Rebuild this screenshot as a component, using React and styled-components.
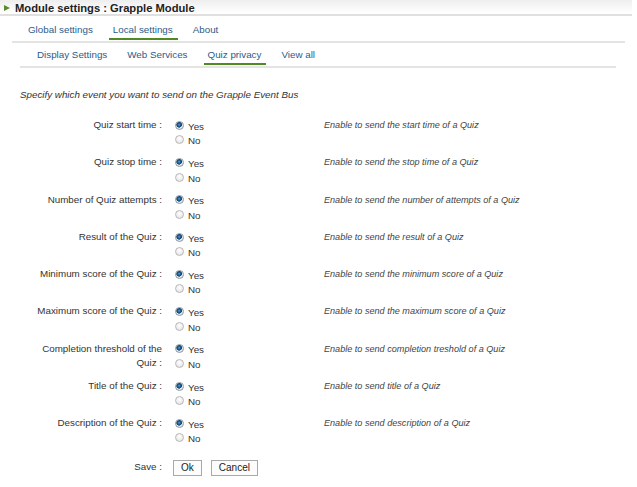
import React from "react";
import styled, { createGlobalStyle } from "styled-components";

const Global = createGlobalStyle`
  html, body { margin: 0; padding: 0; background: #fff; }
  body { font-family: "Liberation Sans", Arial, sans-serif; font-size: 9.8px; color: #333; }
`;

const Page = styled.div`
  width: 637px;
  min-height: 487px;
  background: #fff;
`;

const Header = styled.div`
  width: 632px;
  height: 16px;
  display: flex;
  align-items: center;
  gap: 5px;
  padding-left: 4px;
  box-sizing: border-box;
  background: linear-gradient(#eeeeee, #fbfbfb 70%, #ffffff);
  border-bottom: 2px solid #e0e0e0;
`;

const Arrow = styled.span`
  width: 0;
  height: 0;
  border-top: 3.5px solid transparent;
  border-bottom: 3.5px solid transparent;
  border-left: 6px solid #5a8c2c;
  margin-top: 1px;
`;

const Title = styled.h1`
  margin: 0;
  font-size: 11.2px;
  font-weight: bold;
  color: #222;
  line-height: 14px;
  margin-top: 1px;
`;

const TabBar = styled.div`
  display: flex;
  gap: 11px;
  margin-left: ${(p) => p.$indent}px;
  width: ${(p) => p.$width}px;
  padding-left: ${(p) => p.$pad}px;
  box-sizing: border-box;
  border-bottom: 2px solid #e4e4e4;
`;

const Tab = styled.a`
  display: block;
  padding: ${(p) => p.$top}px 5px 2px 4px;
  line-height: 12px;
  font-size: 9.8px;
  color: #2d5b8a;
  text-decoration: none;
  border-bottom: 2px solid ${(p) => (p.$active ? "#4f8a22" : "transparent")};
  margin-bottom: 1px;
  cursor: pointer;
`;

const Intro = styled.p`
  margin: 21px 0 18px 20px;
  line-height: 12px;
  font-style: italic;
  font-size: 9.8px;
  color: #333;
`;

const FieldRow = styled.div`
  display: grid;
  grid-template-columns: 125px 162px 1fr;
  padding-left: 37px;
  margin-bottom: 8.25px;
`;

const Label = styled.div`
  text-align: right;
  line-height: 14.5px;
  margin-top: -1px;
  color: #333;
`;

const Options = styled.div`
  padding-left: 13px;
  display: flex;
  flex-direction: column;
`;

const Option = styled.label`
  display: flex;
  align-items: center;
  gap: 4px;
  height: 14.5px;
  color: #333;
`;

const Radio = styled.input.attrs({ type: "radio" })`
  appearance: none;
  -webkit-appearance: none;
  margin: 0;
  width: 9px;
  height: 9px;
  border-radius: 50%;
  box-sizing: border-box;
  border: 1px solid #b8b8b8;
  background: radial-gradient(circle at 50% 35%, #ffffff, #e6e6e6 80%);
  margin-top: -2px;
  &:checked {
    border-color: #8a9aa8;
    background: radial-gradient(circle at 45% 40%, #6e9cc4 0, #1f5a8c 1.5px, #17456f 2.6px, #e9eef2 3px, #cfd6dc 100%);
  }
`;

const Desc = styled.div`
  font-style: italic;
  font-size: 9.1px;
  line-height: 12px;
  color: #444;
`;

const SaveRow = styled.div`
  display: grid;
  grid-template-columns: 125px 1fr;
  padding-left: 37px;
  margin-top: 14px;
  align-items: center;
`;

const Buttons = styled.div`
  display: flex;
  gap: 9px;
  padding-left: 11px;
`;

const Button = styled.button`
  height: 16px;
  padding: 0 7px;
  font-family: "Liberation Sans", Arial, sans-serif;
  font-size: 10px;
  line-height: 14px;
  color: #222;
  background: #fcfcfc;
  border: 1px solid #a9a9a9;
  border-radius: 0;
`;

const fields = [
  ["Quiz start time :", "Enable to send the start time of a Quiz"],
  ["Quiz stop time :", "Enable to send the stop time of a Quiz"],
  ["Number of Quiz attempts :", "Enable to send the number of attempts of a Quiz"],
  ["Result of the Quiz :", "Enable to send the result of a Quiz"],
  ["Minimum score of the Quiz :", "Enable to send the minimum score of a Quiz"],
  ["Maximum score of the Quiz :", "Enable to send the maximum score of a Quiz"],
  ["Completion threshold of the Quiz :", "Enable to send completion treshold of a Quiz"],
  ["Title of the Quiz :", "Enable to send title of a Quiz"],
  ["Description of the Quiz :", "Enable to send description of a Quiz"],
];

export default function App() {
  return (
    <Page>
      <Global />
      <Header>
        <Arrow />
        <Title>Module settings : Grapple Module</Title>
      </Header>
      <TabBar $indent={12} $width={613} $pad={12}>
        <Tab $top={8}>Global settings</Tab>
        <Tab $top={8} $active>Local settings</Tab>
        <Tab $top={8}>About</Tab>
      </TabBar>
      <TabBar $indent={20} $width={596} $pad={13}>
        <Tab $top={6}>Display Settings</Tab>
        <Tab $top={6}>Web Services</Tab>
        <Tab $top={6} $active>Quiz privacy</Tab>
        <Tab $top={6}>View all</Tab>
      </TabBar>
      <Intro>Specify which event you want to send on the Grapple Event Bus</Intro>
      {fields.map(([label, desc], i) => (
        <FieldRow key={i}>
          <Label>{label}</Label>
          <Options>
            <Option>
              <Radio name={`f${i}`} defaultChecked />
              Yes
            </Option>
            <Option>
              <Radio name={`f${i}`} />
              No
            </Option>
          </Options>
          <Desc>{desc}</Desc>
        </FieldRow>
      ))}
      <SaveRow>
        <Label>Save :</Label>
        <Buttons>
          <Button>Ok</Button>
          <Button>Cancel</Button>
        </Buttons>
      </SaveRow>
    </Page>
  );
}
